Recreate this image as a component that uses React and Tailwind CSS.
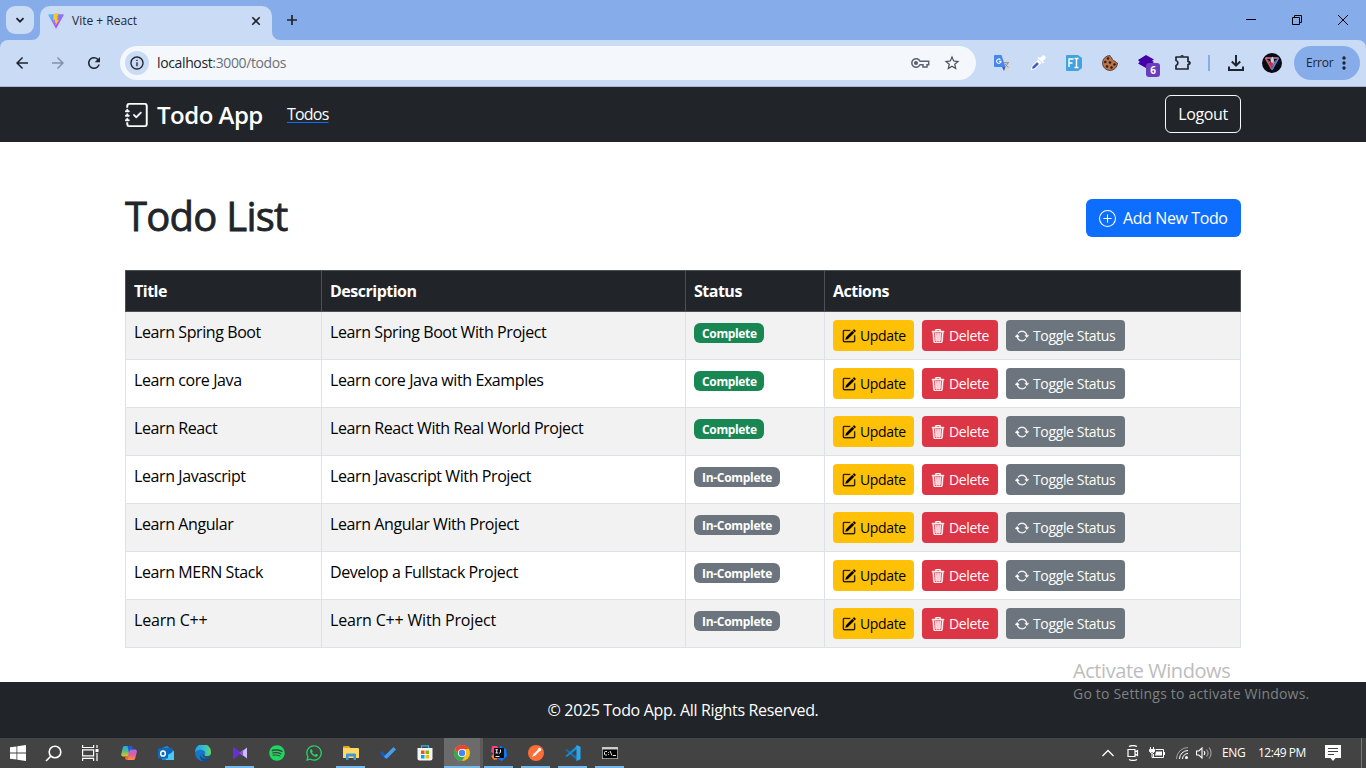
import React from "react";
import {
  BsJournalCheck,
  BsPlusCircle,
  BsPencilSquare,
  BsTrash3,
  BsArrowRepeat,
} from "react-icons/bs";
import {
  MdArrowBack,
  MdArrowForward,
  MdRefresh,
  MdStarBorder,
  MdOutlineInfo,
} from "react-icons/md";
import { FaWhatsapp, FaSpotify } from "react-icons/fa";

function ViteLogo() {
  return (
    <svg className="size-4 shrink-0" viewBox="0 0 16 16">
      <defs>
        <linearGradient id="vite" x1="0" y1="0" x2="1" y2="1">
          <stop offset="0" stopColor="#41d1ff" />
          <stop offset=".8" stopColor="#bd34fe" />
        </linearGradient>
      </defs>
      <path d="M0 1.5 8 .8l8 .7L8 15.8z" fill="url(#vite)" />
      <path d="M11.2 0 5.6 1 5.2 7.2l2-.4-.6 3 1.4-.4-.8 3.6 3.8-6.2-1.9.3 1-2.9-1.4.3z" fill="#ffc81f" />
    </svg>
  );
}

function TabStrip() {
  return (
    <div className="flex h-10 items-end bg-[#86ade9] pl-1.5 pr-[17px] text-[#1f2937]">
      <button className="mb-1.5 flex h-7 w-7 items-center justify-center rounded-[9px] bg-[#cadbf6]">
        <svg className="size-3" viewBox="0 0 12 12" fill="none" stroke="#20242b" strokeWidth="1.9"><path d="m2.5 4.2 3.5 3.5 3.5-3.5" /></svg>
      </button>
      <svg className="ml-[-2px] h-2 w-2" viewBox="0 0 8 8"><path d="M8 0v8H0a8 8 0 0 0 8-8" fill="#cadbf6" /></svg>
      <div className="flex h-[34px] w-[232px] items-center rounded-t-[10px] bg-[#cadbf6] pb-[5px] pl-2 pr-2">
        <ViteLogo />
        <span className="ml-2 flex-1 text-[12px] tracking-[0px]">Vite + React</span>
        <svg className="mr-0.5 size-3" viewBox="0 0 12 12" fill="none" stroke="#20242b" strokeWidth="1.6"><path d="m2.300 2.300 7.400 7.400m0-7.400-7.400 7.400" /></svg>
      </div>
      <svg className="h-2 w-2" viewBox="0 0 8 8"><path d="M0 0v8h8a8 8 0 0 1-8-8" fill="#cadbf6" /></svg>
      <svg className="mb-3.5 ml-[6px] size-3" viewBox="0 0 12 12" stroke="#20242b" strokeWidth="1.7"><path d="M6 1v10M1 6h10" /></svg>
      <div className="flex-1" />
      <div className="mb-[14px] flex items-center gap-[34px]">
        <svg className="size-3" viewBox="0 0 12 12" stroke="#000"><path d="M1 5.500h10" /></svg>
        <svg className="size-3" viewBox="0 0 12 12" stroke="#000" fill="none"><path d="M1.500 3.500h7v7h-7zM3.500 3.500v-2h7v7h-2" /></svg>
        <svg className="size-3" viewBox="0 0 12 12" stroke="#000"><path d="m1 1 10 10m0-10L1 11" /></svg>
      </div>
    </div>
  );
}

function Toolbar() {
  return (
    <div className="bg-[#86ade9]">
      <div className="flex h-[47px] items-center rounded-t-lg border-b border-[#a9b7cf] bg-[#cadbf6] pr-1.5 text-[#20242b]">
        <MdArrowBack className="ml-[13px] size-[18px]" />
        <MdArrowForward className="ml-[18px] size-[18px] text-[#8592a8]" />
        <MdRefresh className="ml-[18px] size-[18px]" />
        <div className="ml-[17px] flex h-[34px] w-[856px] shrink-0 items-center rounded-full bg-[#f4f8fd] pl-[5px] pr-[15px]">
          <span className="flex size-6 items-center justify-center rounded-full bg-[#cadbf6]">
            <MdOutlineInfo className="size-4" />
          </span>
          <span className="ml-2 flex-1 pb-px text-[14px] tracking-[-0.37px] text-[#6b7078]">
            <span className="text-[#20242b]">localhost</span>:3000/todos
          </span>
          <svg className="h-3.5 w-5 text-[#5b6270]" viewBox="0 0 20 14" fill="none" stroke="currentColor" strokeWidth="1.5">
            <path d="M10 5.2a4.300 4.300 0 1 0 0 3.600h3V11h4V8.800h1.700V5.200z" />
            <circle cx="6" cy="7" r="1.300" fill="currentColor" />
          </svg>
          <MdStarBorder className="ml-[13px] size-[18px] text-[#4a505c]" />
        </div>
        <div className="ml-[18px] flex items-center">
          <svg className="size-4" viewBox="0 0 16 16">
            <path d="M6 5h9a1 1 0 0 1 1 1v9a1 1 0 0 1-1 1h-4z" fill="#d6d6d6" />
            <path d="M1 0h6.500l4 12H1a1 1 0 0 1-1-1V1a1 1 0 0 1 1-1" fill="#4886ef" />
            <path d="m8 12 3.500 0L10 16z" fill="#3460b8" />
            <path d="M6.400 4.600A2.200 2.200 0 1 0 7 6.200H5" fill="none" stroke="#fff" strokeWidth="1.100" />
            <path d="M10 7.700h5M13.700 8c-.5 2-1.600 3.200-3 4.200M11 9l3.300 3.500" stroke="#778899" strokeWidth=".9" fill="none" />
          </svg>
          <svg className="ml-5 size-4" viewBox="0 0 16 16">
            <path d="M1.500 14.500 2.300 11l5.700-6 3 3-6 5.700z" fill="#fff" stroke="#fff" />
            <path d="m2.500 13.500.5-2 4-4 1.500 1.500-4 4z" fill="#3d52c4" stroke="#3d52c4" strokeWidth=".6" />
            <path d="m7.500 3 1.200-1.200L10 3l2-2a2 2 0 0 1 3 3l-2 2 1.200 1.200L13 8.500z" fill="#fff" />
          </svg>
          <svg className="ml-5 size-4" viewBox="0 0 16 16">
            <path d="M1 0h11l4 3v10l-4 3H1a1 1 0 0 1-1-1V1a1 1 0 0 1 1-1" fill="#42a3de" />
            <path d="M3 12V4h4.500M3 8h3.500M8.500 3.500h4M8.500 12.500h4M10.500 3.500v9" stroke="#fff" strokeWidth="1.400" fill="none" />
          </svg>
          <svg className="ml-5 size-4" viewBox="0 0 16 16">
            <path d="M8 .5A7.500 7.500 0 1 0 15.500 8 2.500 2.500 0 0 1 13 6a2.800 2.800 0 0 1-3-3A2.500 2.500 0 0 1 8 .5" fill="#b9734a" stroke="#4b3022" strokeWidth=".8" />
            <g fill="#2c1a13"><circle cx="6" cy="3.500" r="1.200" /><circle cx="3.300" cy="7" r="1.200" /><circle cx="8" cy="7.500" r="1.300" /><circle cx="5" cy="11.500" r="1.300" /><circle cx="9.500" cy="12.500" r="1.200" /><circle cx="12.500" cy="9.500" r="1.200" /></g>
          </svg>
          <div className="relative ml-5 size-4">
            <svg className="size-4" viewBox="0 0 16 16"><path d="m8 0 8 4.500-2 1.200 2 1.300L8 13 0 8.500 1.800 7 0 5z" fill="#4400a8" /></svg>
            <span className="absolute left-[8px] top-[8px] flex h-3.5 w-3.5 items-center justify-center rounded-[3px] bg-[#6d3bbd] text-[10px] font-bold leading-none text-white">6</span>
          </div>
          <svg className="ml-5 h-[18px] w-[18px]" viewBox="0 0 18 18">
            <path d="M2 3h12v4.500a1.500 1.500 0 0 1 0 3V15H2v-3.500a2.600 2.600 0 0 0 0-5z" fill="none" stroke="#20242b" strokeWidth="1.700" strokeLinejoin="round" />
            <path d="M6 2.500a2.200 2.200 0 0 1 4.200 0M14.800 7a2 2 0 0 1 0 4" fill="#20242b" />
          </svg>
          <div className="ml-[16px] h-4 w-0.5 bg-[#86ade9]" />
          <svg className="ml-[18px] size-4" viewBox="0 0 16 16" fill="none" stroke="#20242b" strokeWidth="2"><path d="M8 0v10.500M3.800 6.500 8 10.700l4.200-4.200M1 11.500V15h14v-3.500" /></svg>
          <svg className="ml-[18px] size-5" viewBox="0 0 20 20">
            <circle cx="10" cy="10" r="10" fill="#090b12" />
            <path d="M3.500 5 10 16.500" stroke="#e0526b" strokeWidth="1.600" />
            <path d="M3.500 5h13" stroke="#e9899b" strokeWidth="1.400" />
            <path d="M16.500 5 10 16.500" stroke="#5b83dc" strokeWidth="1.600" />
            <path d="m6.500 7.500 3.500 6 3.500-6" fill="none" stroke="#8391ca" />
            <path d="m8.500 6.500 2-3 1.500 3-.5 5H9z" fill="#d9c5da" /><circle cx="9.300" cy="11" r="1.800" fill="#c02d48" />
          </svg>
        </div>
        <div className="ml-3 flex h-[34px] w-[66px] shrink-0 items-center rounded-full bg-[#86ade9] pl-3 text-[12px] tracking-[-0.25px]">
          <span className="w-[27px]">Error</span>
          <svg className="ml-[9px] h-4 w-1" viewBox="0 0 4 16" fill="#20242b"><circle cx="2" cy="3" r="1.700" /><circle cx="2" cy="8" r="1.700" /><circle cx="2" cy="13" r="1.700" /></svg>
        </div>
      </div>
    </div>
  );
}

const todos = [
  ["Learn Spring Boot", "Learn Spring Boot With Project", true],
  ["Learn core Java", "Learn core Java with Examples", true],
  ["Learn React", "Learn React With Real World Project", true],
  ["Learn Javascript", "Learn Javascript With Project", false],
  ["Learn Angular", "Learn Angular With Project", false],
  ["Learn MERN Stack", "Develop a Fullstack Project", false],
  ["Learn C++", "Learn C++ With Project", false],
];

function Row({ todo, striped }) {
  const [title, description, done] = todo;
  const cell = "border-b border-r border-[#dee2e6] px-2 pt-2 leading-6";
  const tracking = title.endsWith("++") ? " tracking-[-0.18px]" : " tracking-[-0.41px]";
  return (
    <div className={"grid h-12 grid-cols-[196px_364px_139px_416px] border-l border-[#dee2e6] text-black " + (striped ? "bg-[#f2f2f2]" : "bg-white")}>
      <div className={cell + tracking}>{title}</div>
      <div className={cell + tracking}>{description}</div>
      <div className="border-b border-r border-[#dee2e6] px-2 pt-2">
        <span className={"mt-[3px] flex h-5 items-center rounded-md px-2 pt-px text-[12px] font-bold leading-none text-white " + (done ? "w-[70px] bg-[#198754] tracking-[-0.35px]" : "w-[86px] bg-[#6c757d] tracking-[-0.3px]")}>
          {done ? "Complete" : "In-Complete"}
        </span>
      </div>
      <div className="flex gap-2 border-b border-r border-[#dee2e6] px-2 pt-2 text-[14px] tracking-[-0.36px]">
        <button className="flex h-[31px] w-[81px] items-center whitespace-nowrap rounded bg-[#ffc107] pl-[9px] text-black"><BsPencilSquare className="mr-1 size-3.5 shrink-0 stroke-current stroke-[0.3]" />Update</button>
        <button className="flex h-[31px] w-[76px] items-center whitespace-nowrap rounded bg-[#dc3545] pl-[9px] text-white"><BsTrash3 className="mr-1 size-3.5 shrink-0 stroke-current stroke-[0.7]" />Delete</button>
        <button className="flex h-[31px] w-[119px] items-center whitespace-nowrap rounded bg-[#6c757d] pl-[9px] text-white"><BsArrowRepeat className="mr-1 size-3.5 shrink-0 stroke-current stroke-[0.4]" />Toggle Status</button>
      </div>
    </div>
  );
}

function Page() {
  return (
    <div className="flex min-h-0 flex-1 flex-col bg-white text-[16px] tracking-[-0.38px] text-[#212529]">
      <nav className="flex h-[55px] items-center bg-[#212529] px-[125px] pb-px text-white">
        <BsJournalCheck className="mt-px size-6 stroke-current stroke-[0.3]" />
        <span className="ml-2 w-[130px] whitespace-nowrap pt-px text-[24px] font-semibold tracking-[-0.5px]">Todo App</span>
        <a className="tracking-[-0.8px] underline decoration-[#0d6efd] decoration-1 underline-offset-2">Todos</a>
        <div className="flex-1" />
        <button className="flex h-[38px] w-[76px] items-center justify-center rounded-md border border-[#f8f9fa]">Logout</button>
      </nav>
      <main className="h-[540px] px-[125px] pt-12">
        <div className="flex h-[80px] items-start justify-between">
          <h1 className="mt-[2px] text-[40px] leading-[48px] tracking-[-0.75px] [-webkit-text-stroke:0.8px_#212529]">Todo List</h1>
          <button className="mt-[9px] flex h-[38px] w-[155px] items-center whitespace-nowrap rounded-md bg-[#0d6efd] pl-[13px] text-white"><BsPlusCircle className="mr-2 size-[17px]" /><span className="-ml-px tracking-[-0.4px]">Add New Todo</span></button>
        </div>
        <div className="grid h-[42px] grid-cols-[196px_364px_139px_416px] border-l border-t border-[#4d5154] bg-[#212529] font-bold tracking-[-0.5px] text-white">
          {["Title", "Description", "Status", "Actions"].map((h) => (
            <div key={h} className="border-b border-r border-[#4d5154] px-2 pt-2 leading-6">{h}</div>
          ))}
        </div>
        {todos.map((todo, i) => <Row key={todo[0]} todo={todo} striped={i % 2 === 0} />)}
      </main>
      <footer className="flex flex-1 items-center justify-center bg-[#212529] tracking-[-0.34px] text-white">© 2025 Todo App. All Rights Reserved.</footer>
    </div>
  );
}

function Slot({ children, state }) {
  return (
    <div className={"relative flex h-[30px] w-[37px] items-center justify-center " + (state === "active" ? "bg-[#6a6b6a]" : "")}>
      {children}
      {state && <div className={"absolute bottom-0 h-0.5 bg-[#76b9ed] " + (state === "active" ? "inset-x-0" : "inset-x-[4px]")} />}
    </div>
  );
}

function Taskbar() {
  return (
    <div className="flex h-[30px] items-center bg-[#424342] text-white">
      <div className="-ml-px flex">
        <Slot><svg className="size-4" viewBox="0 0 16 16" fill="#fff"><path d="M0 2.300 6.500 1.400v6.200H0zM7.300 1.300 16 0v7.600H7.300zM0 8.400h6.500v6.200L0 13.700zM7.300 8.400H16V16l-8.700-1.300z" /></svg></Slot>
        <Slot><svg className="-ml-0.5 size-[17px]" viewBox="0 0 17 17" fill="none" stroke="#fff" strokeWidth="1.600"><circle cx="10" cy="7" r="5.800" /><path d="m6 11-5 5" /></svg></Slot>
        <Slot><svg className="-ml-0.5 h-4 w-[17px]" viewBox="0 0 17 16" fill="none" stroke="#fff" strokeWidth="1.200"><path d="M.6 0v2.500h11V0M.6 4.800h11v6H.6zM.6 16v-2.600h11V16M15 0v3M15 8v8" /><path d="M13.500 4h3v3h-3z" fill="#fff" stroke="none" /></svg></Slot>
        <Slot>
          <svg className="size-4" viewBox="0 0 16 16">
            <defs>
              <linearGradient id="copA" x1="0" y1="0" x2="0" y2="1"><stop stopColor="#29a7ef" /><stop offset=".5" stopColor="#56bc82" /><stop offset="1" stopColor="#f0c51a" /></linearGradient>
              <linearGradient id="copB" x1="0" y1="0" x2="0" y2="1"><stop stopColor="#a56af0" /><stop offset=".5" stopColor="#e65aa0" /><stop offset="1" stopColor="#fa923f" /></linearGradient>
            </defs>
            <path d="M4 1h6L7.500 11.500H2.200C.6 11.500 0 10.500.3 9l1.400-6C2 1.600 2.800 1 4 1" fill="url(#copA)" />
            <path d="M8.500 4.500h5.300c1.600 0 2.400 1 2 2.500l-1.500 6c-.3 1.400-1.100 2-2.300 2H6z" fill="url(#copB)" />
            <path d="M6.500 1H10c1 0 1.500.5 1.700 1.300l.6 2.200H9L8 8z" fill="#215bd3" /><path d="M4 11.500h3.500L8.500 8 6.600 15H6c-1 0-1.600-.7-1.800-1.500z" fill="#ed6b34" />
          </svg>
        </Slot>
        <Slot>
          <svg className="size-4" viewBox="0 0 16 16">
            <path d="M4 3 9 1l7 5v9H4z" fill="#1490df" /><path d="M5 3h9v6H5z" fill="#1066b5" /><path d="m16 6-9 6 1 3h8z" fill="#4bc8f4" /><rect y="3.500" width="10" height="10" rx="1" fill="#0f6cbd" /><ellipse cx="5" cy="8.500" rx="2.300" ry="2.600" fill="none" stroke="#fff" strokeWidth="1.500" />
          </svg>
        </Slot>
        <Slot>
          <svg className="size-4" viewBox="0 0 16 16">
            <defs><linearGradient id="edge"><stop stopColor="#1d9ee8" /><stop offset=".6" stopColor="#35c1cf" /><stop offset="1" stopColor="#67d84e" /></linearGradient></defs>
            <circle cx="8" cy="8" r="8" fill="#1477c9" />
            <path d="M0 7A8 8 0 0 1 16 7c.1 2.800-2 4-4.400 4-1.900 0-2.700-.7-2-1.600C12 6 6 2.500 0 7" fill="url(#edge)" />
            <path d="M5.500 8c-1.500 3 1.500 6 6 5.500l3.500-1.300C12 18 5.500 16.500 5 12c-.2-1.500 0-3 .5-4" fill="#0b4b94" />
            <path d="M9.500 9.500c-.9 1.200.5 2 2.500 2 1.800 0 3-.6 4-1.700l-1 2.300c-4 2-8 .3-7.500-3z" fill="#424342" />
          </svg>
        </Slot>
        <Slot state="open"><svg className="h-3 w-3.5" viewBox="0 0 14 12"><path d="m0 1 1-1 7 6-7 6-1-1z" fill="#6a2fd0" /><path d="m14 .5-7 5.500 7 5.500z" fill="#d0baf7" /><path d="M0 1.500 7 6l-7 4.500z" fill="#6a2fd0" /><path d="M10 2.800 6 6l4 3.200z" fill="#8655da" /></svg></Slot>
        <Slot><FaSpotify className="size-4 text-[#1ed760]" /></Slot>
        <Slot><FaWhatsapp className="size-[18px] text-[#25d366]" /></Slot>
        <Slot state="open"><svg className="h-3.5 w-4" viewBox="0 0 16 14"><path d="M0 1a1 1 0 0 1 1-1h5l1.500 2H0z" fill="#e5a31a" /><path d="M0 2h15a1 1 0 0 1 1 1v9H0z" fill="#ffd968" /><path d="M3 14V8.500a1 1 0 0 1 1-1h8a1 1 0 0 1 1 1V14h-2.500v-3.500h-5V14z" fill="#3f95d5" /></svg></Slot>
        <Slot><svg className="h-3 w-4" viewBox="0 0 16 12"><path d="m0 6 2-2 5 5-2.500 2.500z" fill="#195abd" /><path d="m13.500 0 2.500 2.500-9.500 9.500L4 9.500z" fill="#409ff0" /></svg></Slot>
        <Slot><svg className="size-4" viewBox="0 0 16 16"><path d="M4.500 4V.8h7V4" fill="none" stroke="#35b8e8" strokeWidth="1.200" /><path d="M.5 3h15v10.500a2 2 0 0 1-2 2h-11a2 2 0 0 1-2-2z" fill="#f5f5f5" /><path d="M4 5.500h3.500V9H4z" fill="#f25022" /><path d="M8.500 5.500H12V9H8.500z" fill="#7fba00" /><path d="M4 10h3.500v3.500H4z" fill="#00a4ef" /><path d="M8.500 10H12v3.500H8.500z" fill="#ffb900" /></svg></Slot>
        <div className="ml-px flex w-9 justify-center overflow-hidden">
          <Slot state="active">
            <svg className="size-4" viewBox="0 0 16 16">
              <circle cx="8" cy="8" r="8" fill="#fbc116" />
              <path d="M1.070 4A8 8 0 0 1 14.930 4H8a4 4 0 0 0-3.460 6z" fill="#ea4335" />
              <path d="M1.070 4A8 8 0 0 0 8 16l3.460-6a4 4 0 0 1-6.920 0z" fill="#34a853" />
              <circle cx="8" cy="8" r="4" fill="#fff" /><circle cx="8" cy="8" r="3.200" fill="#4285f4" />
            </svg>
          </Slot>
        </div>
        <div className="-mr-[3px] w-[3px] bg-[#5a5b5a]" />
        <Slot state="open"><svg className="size-4" viewBox="0 0 16 16"><path d="M1 1h5l3 4-3 10-5-2 1-5-2-1z" fill="#f54184" /><path d="m9 1 6 3 1 7-5 5-6-3z" fill="#087cfa" /><path d="m0 11 4-2 2 5-3 1z" fill="#fc801d" /><path d="M3 3h10v10H3z" fill="#100b10" /><path d="M4.500 4.700h2.400M5.700 4.700v3.300M4.500 8h2.400M9.500 4.500V7c0 1-.8 1.300-1.700.9M4.500 11.500h4" stroke="#fff" strokeWidth=".9" fill="none" /></svg></Slot>
        <Slot state="open"><svg className="size-4" viewBox="0 0 16 16"><circle cx="8" cy="8" r="8" fill="#ff6c37" /><path d="m4 12 2-3.500 4-3.700 1.500 1.500-4 4z" fill="#fff" /><circle cx="11.500" cy="4.500" r="1.700" fill="#fff" /></svg></Slot>
        <Slot state="open"><svg className="size-4" viewBox="0 0 16 16"><path d="m.5 5 1.200-1 10.300 8v3.500z" fill="#0d74bb" /><path d="m.5 11 1.200 1L12 4V.5z" fill="#168fd8" /><path d="m11.500 0 4 1.800v12.400l-4 1.800z" fill="#2ca7ef" /></svg></Slot>
        <Slot state="open"><svg className="h-3 w-4" viewBox="0 0 16 12"><path d="M0 0h16v12H0z" fill="#ccc" /><path d="M.7 2.500h14.600v8.800H.7z" fill="#000" /><path d="M5 4.500H3.500a1 1 0 0 0-1 1V7a1 1 0 0 0 1 1H5M6.500 5v.8M6.500 7.200V8M8 4l2 4.500M11 8.500h3" fill="none" stroke="#fff" strokeWidth=".9" /></svg></Slot>
      </div>
      <div className="flex-1" />
      <div className="flex items-center">
        <svg className="-mr-px h-2 w-3" viewBox="0 0 12 8" fill="none" stroke="#fff" strokeWidth="1.300"><path d="m.5 7 5.500-5.500L11.500 7" /></svg>
        <svg className="ml-3.5 h-4 w-3" viewBox="0 0 12 16" fill="none" stroke="#fff" strokeWidth="1.200"><path d="M1 4.500h7v7H1zM8 7l2.500-1.500v5L8 9M2 1.500C4.500.3 7.500.3 10 1.500M2 14.500c2.500 1.200 5.500 1.200 8 0" /></svg>
        <svg className="ml-2.5 h-3 w-4" viewBox="0 0 16 12"><path d="M1.500 0v2M4.500 0v2M.500 2.500h5v2l-1.500 1.500H2L.500 4.500zM3 6v4.500h2" fill="none" stroke="#fff" /><path d="M1 2h4.500v3H1z" fill="#fff" /><path d="M6.500 2.500h8v8H4.500V7" fill="none" stroke="#fff" /><path d="M7 4.500h6v4H6z" fill="#fff" /><path d="M15 5h1v3h-1z" fill="#fff" /></svg>
        <svg className="ml-[11px] h-3 w-3" viewBox="0 0 12 12" fill="none" stroke="#fff"><path d="M.5 12A11.500 11.500 0 0 1 12 .5" opacity=".5" /><path d="M3.500 12A8.500 8.500 0 0 1 12 3.500M6.500 12A5.500 5.500 0 0 1 12 6.500" /><circle cx="10.500" cy="10.500" r="1.500" fill="#fff" stroke="none" /></svg>
        <svg className="ml-2 h-3.5 w-4" viewBox="0 0 16 14" fill="none" stroke="#fff" strokeWidth="1.100"><path d="M.5 5h2.300L6 2v10L2.800 9H.5z" /><path d="M8 5c1 1.200 1 2.800 0 4" /><path d="M10.500 3.500c1.800 2 1.800 5 0 7M13 1.500c2.700 3 2.700 8 0 11" opacity=".5" /></svg>
        <span className="ml-2.5 w-[36px] whitespace-nowrap text-[12px] tracking-[-0.35px]">ENG</span>
        <span className="w-[67px] whitespace-nowrap text-[12px] tracking-[-0.5px]">12:49 PM</span>
        <svg className="h-4 w-4" viewBox="0 0 16 16"><path d="M0 0h16v13h-5.500L8 16l-2.500-3H0z" fill="#fff" /><path d="M3 3.500h10M3 6.500h10M3 9.500h6" stroke="#424342" /></svg>
        <div className="ml-5 h-[30px] w-px bg-[#777]" />
        <div className="w-[4px]" />
      </div>
    </div>
  );
}

export default function App() {
  return (
    <div className="relative flex h-[768px] w-[1366px] flex-col overflow-hidden font-['Open_Sans','Noto_Sans',sans-serif]">
      <TabStrip />
      <Toolbar />
      <Page />
      <Taskbar />
      <div className="absolute left-[1073px] top-[658px] whitespace-nowrap">
        <div className="text-[20px] leading-[26px] tracking-[-0.43px] text-[#bdbdbd]">Activate Windows</div>
        <div className="text-[14px] leading-5 tracking-[0.2px] text-[#7f8183]">Go to Settings to activate Windows.</div>
      </div>
    </div>
  );
}
